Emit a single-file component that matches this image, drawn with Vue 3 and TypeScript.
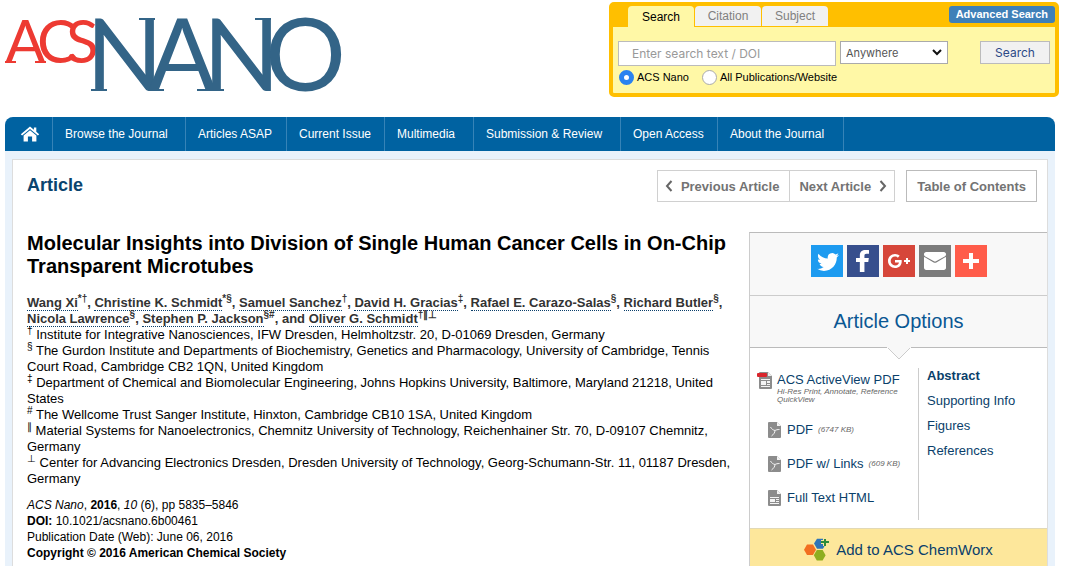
<script setup lang="ts">
import { ref } from 'vue'

interface Author {
  name: string
  marks: string
}

interface Affiliation {
  mark: string
  text: string
}

const scopes = ['Search', 'Citation', 'Subject']
const activeScope = ref('Search')
const query = ref('')
const field = ref('Anywhere')
const where = ref('nano')

const navItems = [
  'Browse the Journal',
  'Articles ASAP',
  'Current Issue',
  'Multimedia',
  'Submission & Review',
  'Open Access',
  'About the Journal',
]

const authors: Author[] = [
  { name: 'Wang Xi', marks: '*†' },
  { name: 'Christine K. Schmidt', marks: '*§' },
  { name: 'Samuel Sanchez', marks: '†' },
  { name: 'David H. Gracias', marks: '‡' },
  { name: 'Rafael E. Carazo-Salas', marks: '§' },
  { name: 'Richard Butler', marks: '§' },
  { name: 'Nicola Lawrence', marks: '§' },
  { name: 'Stephen P. Jackson', marks: '§#' },
  { name: 'Oliver G. Schmidt', marks: '†∥⊥' },
]

const affiliations: Affiliation[] = [
  { mark: '†', text: 'Institute for Integrative Nanosciences, IFW Dresden, Helmholtzstr. 20, D-01069 Dresden, Germany' },
  { mark: '§', text: 'The Gurdon Institute and Departments of Biochemistry, Genetics and Pharmacology, University of Cambridge, Tennis Court Road, Cambridge CB2 1QN, United Kingdom' },
  { mark: '‡', text: 'Department of Chemical and Biomolecular Engineering, Johns Hopkins University, Baltimore, Maryland 21218, United States' },
  { mark: '#', text: 'The Wellcome Trust Sanger Institute, Hinxton, Cambridge CB10 1SA, United Kingdom' },
  { mark: '∥', text: 'Material Systems for Nanoelectronics, Chemnitz University of Technology, Reichenhainer Str. 70, D-09107 Chemnitz, Germany' },
  { mark: '⊥', text: 'Center for Advancing Electronics Dresden, Dresden University of Technology, Georg-Schumann-Str. 11, 01187 Dresden, Germany' },
]

const shares = [
  {
    name: 'Twitter',
    tone: 'twitter',
    path: 'M27.996 10.116c-.81.36-1.68.602-2.592.71a4.526 4.526 0 0 0 1.984-2.496 9.037 9.037 0 0 1-2.866 1.095 4.513 4.513 0 0 0-7.69 4.116 12.81 12.81 0 0 1-9.3-4.715 4.49 4.49 0 0 0-.612 2.27 4.51 4.51 0 0 0 2.008 3.755 4.495 4.495 0 0 1-2.044-.564v.057a4.515 4.515 0 0 0 3.62 4.425 4.52 4.52 0 0 1-2.04.077 4.517 4.517 0 0 0 4.217 3.134 9.055 9.055 0 0 1-5.604 1.93A9.18 9.18 0 0 1 6 23.85a12.773 12.773 0 0 0 6.918 2.027c8.3 0 12.84-6.876 12.84-12.84 0-.195-.005-.39-.014-.583a9.172 9.172 0 0 0 2.252-2.336',
  },
  {
    name: 'Facebook',
    tone: 'facebook',
    path: 'M22 5.16c-.406-.054-1.806-.16-3.43-.16-3.4 0-5.733 1.825-5.733 5.17v2.882H9v3.913h3.837V27h4.604V16.965h3.823l.587-3.913h-4.41v-2.5c0-1.123.347-1.903 2.198-1.903H22V5.16z',
  },
  {
    name: 'Google+',
    tone: 'google',
    path: 'M12 15v2.4h3.97c-.16 1.03-1.2 3.02-3.97 3.02-2.39 0-4.34-1.98-4.34-4.42s1.95-4.42 4.34-4.42c1.36 0 2.27.58 2.79 1.08l1.9-1.83C15.47 9.69 13.89 9 12 9c-3.87 0-7 3.13-7 7s3.13 7 7 7c4.04 0 6.72-2.84 6.72-6.84 0-.46-.05-.81-.11-1.16H12zm15 0h-2v-2h-2v2h-2v2h2v2h2v-2h2v-2z',
  },
  {
    name: 'Email',
    tone: 'email',
    path: 'M27 22.757c0 1.24-.988 2.243-2.19 2.243H7.19C5.98 25 5 23.994 5 22.757V12.67c0-.556.39-.773.855-.496l8.78 5.238c.782.467 1.95.467 2.73 0l8.78-5.238c.472-.28.855-.063.855.495v10.087zM27 9.243C27 8.006 26.02 7 24.81 7H7.19C5.988 7 5 8.004 5 9.243v.465c0 .554.385 1.232.857 1.514l9.61 5.233c.267.16.8.16 1.067 0l9.61-5.233c.473-.283.856-.96.856-1.514v-.465z',
  },
  { name: 'More', tone: 'more', path: 'M18 14V8h-4v6H8v4h6v6h4v-6h6v-4h-6z' },
]

const downloads = [
  { label: 'PDF', size: '(6747 KB)', kind: 'pdf' },
  { label: 'PDF w/ Links', size: '(609 KB)', kind: 'pdf' },
  { label: 'Full Text HTML', size: '', kind: 'html' },
]

const sections = ['Abstract', 'Supporting Info', 'Figures', 'References']

function joiner(index: number): string {
  if (index === authors.length - 1) return ''
  return index === authors.length - 2 ? ', and ' : ', '
}
</script>

<template>
  <div class="page">
    <header class="masthead">
      <a class="logo" href="#" aria-label="ACS Nano">
        <svg width="350" height="110" viewBox="0 0 350 110">
          <text class="logo-acs" x="5 37 66" y="63">ACS</text>
          <text class="logo-nano" x="86 148 203 265" y="91">NANO</text>
          <path d="M5 62h11M35 62h11" stroke="#ed3a32" stroke-width="2" />
          <path d="M91 90h16M139 19h16M149 90h15M197 90h27M255 19h16" stroke="#336487" stroke-width="2" />
        </svg>
      </a>

      <form class="search" @submit.prevent>
        <div class="search-top">
          <div class="tabs">
            <button
              v-for="scope in scopes"
              :key="scope"
              type="button"
              class="tab"
              :class="{ active: scope === activeScope }"
              @click="activeScope = scope"
            >{{ scope }}</button>
          </div>
          <a class="advanced" href="#">Advanced Search</a>
        </div>
        <div class="search-row">
          <input v-model="query" class="query" type="text" placeholder="Enter search text / DOI" aria-label="Search text" />
          <div class="picker">
            <select v-model="field" aria-label="Search field">
              <option>Anywhere</option>
              <option>Title</option>
              <option>Author</option>
              <option>Abstract</option>
            </select>
            <svg class="picker-arrow" width="10" height="7" viewBox="0 0 10 7"><path d="M1 1l4 4 4-4" fill="none" stroke="#111" stroke-width="2" /></svg>
          </div>
          <button class="go" type="submit">Search</button>
        </div>
        <div class="search-where">
          <label><input v-model="where" type="radio" name="where" value="nano" />ACS Nano</label>
          <label><input v-model="where" type="radio" name="where" value="all" />All Publications/Website</label>
        </div>
      </form>
    </header>

    <div class="shell">
      <nav class="nav">
        <a class="nav-home" href="#" aria-label="Home">
          <svg width="20" height="16" viewBox="0 0 20 16" fill="#fff">
            <path d="M10 0.4L0.8 8.2l1.3 1.4L10 3l7.9 6.6 1.3-1.4-2.9-2.5V1.6h-2.4v2.1z" />
            <path d="M10 4.2L3.6 9.5V15.6h4.3v-5h4.2v5h4.3V9.5z" />
          </svg>
        </a>
        <a v-for="item in navItems" :key="item" href="#">{{ item }}</a>
      </nav>

      <main class="panel">
        <div class="topline">
          <h2>Article</h2>
          <div class="pager">
            <button type="button">
              <svg width="8" height="12" viewBox="0 0 8 12"><path d="M6.5 1L2 6l4.5 5" /></svg>Previous Article
            </button>
            <button type="button">
              Next Article<svg width="8" height="12" viewBox="0 0 8 12"><path d="M1.5 1L6 6l-4.5 5" /></svg>
            </button>
          </div>
          <button type="button" class="toc">Table of Contents</button>
        </div>

        <div class="columns">
          <article class="article">
            <h1>Molecular Insights into Division of Single Human Cancer Cells in On-Chip Transparent Microtubes</h1>
            <p class="authors"><template v-for="(author, i) in authors" :key="author.name"><a href="#">{{ author.name }}</a><sup>{{ author.marks }}</sup>{{ joiner(i) }}</template></p>
            <p v-for="aff in affiliations" :key="aff.mark" class="affiliation"><sup>{{ aff.mark }}</sup> {{ aff.text }}</p>
            <div class="citation">
              <p><i>ACS Nano</i>, <b>2016</b>, <i>10</i> (6), pp 5835–5846</p>
              <p><b>DOI:</b> 10.1021/acsnano.6b00461</p>
              <p>Publication Date (Web): June 06, 2016</p>
              <p><b>Copyright © 2016 American Chemical Society</b></p>
            </div>
          </article>

          <aside class="side">
            <div class="shares">
              <a v-for="share in shares" :key="share.name" href="#" :class="share.tone" :aria-label="share.name">
                <svg width="32" height="32" viewBox="0 0 32 32" fill="#fff"><path :d="share.path" /></svg>
              </a>
            </div>
            <div class="options-head">
              <h3>Article Options</h3>
              <svg class="notch" width="24" height="13" viewBox="0 0 24 13">
                <path d="M0 0h24v1h-1L12 12 1 1H0z" fill="#f8f8f8" />
                <path d="M1 1l11 11L23 1" fill="none" stroke="#ccc" />
              </svg>
            </div>
            <div class="options">
              <div class="downloads">
                <div class="active-view">
                  <svg width="16" height="18" viewBox="0 0 16 18">
                    <path d="M3 0h8l4 4v12a1 1 0 0 1-1 1H3a1 1 0 0 1-1-1V1a1 1 0 0 1 1-1z" fill="#8c8c8c" />
                    <path d="M11 0l4 4h-4z" fill="#eee" />
                    <path d="M4 7h9v1H4zM4 9h5v4H4zM10 9h3v2h-3zM10 12h3v1h-3zM4 14h9v1H4z" fill="#f4f4f4" />
                    <rect x="0" y="1" width="10" height="4" rx="1" fill="#d9252c" />
                  </svg>
                  <div>
                    <a href="#">ACS ActiveView PDF</a>
                    <small>Hi-Res Print, Annotate, Reference QuickView</small>
                  </div>
                </div>
                <div v-for="item in downloads" :key="item.label" class="download">
                  <svg width="14" height="17" viewBox="0 0 14 17">
                    <path d="M1 0h8l4 4v11a1 1 0 0 1-1 1H1a1 1 0 0 1-1-1V1a1 1 0 0 1 1-1z" fill="#8c8c8c" />
                    <path d="M9 0l4 4H9z" fill="#f4f4f4" />
                    <path v-if="item.kind === 'pdf'" d="M2.5 5c1 2 2.500 3 4.500 3.500M11.5 7.500c-2 0-3.500.4-4.500 1M7 8.500c0 2-1.500 4-3.500 5.500" fill="none" stroke="#f4f4f4" />
                    <path v-else d="M2 7h9v1H2zM2 9h5v3H2zM8 9h3v1H8zM8 11h3v1H8zM2 13h9v1H2z" fill="#f4f4f4" />
                  </svg>
                  <a href="#">{{ item.label }}</a>
                  <small v-if="item.size">{{ item.size }}</small>
                </div>
              </div>
              <ul class="sections">
                <li v-for="(section, i) in sections" :key="section" :class="{ current: i === 0 }"><a href="#">{{ section }}</a></li>
              </ul>
            </div>
            <a class="chemworx" href="#">
              <svg width="25" height="23" viewBox="0 0 25 23">
                <path d="M3 6.5h6l3 5.2-3 5.200H3L0 11.700z" fill="#f26f21" />
                <path d="M13 .8h6l3 4.700-3 5.200h-6l-3-5.200z" fill="#2f74b8" />
                <path d="M12.800 12h5.800l3 5.200-3 5.200h-5.800l-3-5.200z" fill="#8fae1f" />
                <path d="M21 0v8M17 4h8" stroke="#fde79b" stroke-width="4" />
                <path d="M21 1v7M17 4h8" stroke="#2e8b3a" stroke-width="2" />
              </svg>
              Add to ACS ChemWorx
            </a>
          </aside>
        </div>
      </main>
    </div>
  </div>
</template>

<style>
body {
  margin: 0;
  background: #fff;
}
</style>

<style scoped>
* {
  box-sizing: border-box;
}

.page {
  display: flex;
  flex-direction: column;
  min-height: 100vh;
  font: 12px/16px "Liberation Sans", Arial, sans-serif;
  color: #000;
}

a {
  color: #0a3f6b;
  text-decoration: none;
}

button {
  margin: 0;
  font-family: inherit;
  cursor: pointer;
}

h1,
h2,
h3,
p,
ul {
  margin: 0;
  padding: 0;
}

.masthead {
  display: flex;
  justify-content: space-between;
  align-items: flex-start;
  height: 117px;
  padding: 2px 9px 0 0;
}

.logo svg {
  display: block;
  margin-top: -2px;
}

.logo-acs {
  font: 60px Lato, sans-serif;
  fill: #ed3a32;
}

.logo-nano {
  font: 101px Lato, sans-serif;
  fill: #336487;
}

.search {
  width: 450px;
  padding-bottom: 8px;
  border: 4px solid #ffbf00;
  border-radius: 5px;
  background: #fff8a6;
}

.search-top {
  display: flex;
  justify-content: space-between;
  align-items: flex-start;
  height: 21px;
  padding-left: 15px;
  background: #ffbf00;
}

.tabs {
  display: flex;
  gap: 1px;
}

.tab {
  width: 66px;
  height: 20px;
  padding: 0;
  border: 0;
  border-radius: 4px 4px 0 0;
  background: #f1f1f1;
  color: #808080;
  font-size: 12px;
}

.tab.active {
  height: 21px;
  background: #fff8a6;
  color: #000;
}

.advanced {
  padding: 0 7px;
  border-radius: 3px;
  background: #3f80b8;
  color: #fff;
  font-size: 11px;
  font-weight: bold;
  line-height: 17px;
}

.search-row {
  display: flex;
  align-items: flex-start;
  gap: 4px;
  padding: 14px 5px 0;
}

.query {
  width: 218px;
  height: 25px;
  padding: 0 13px;
  border: 1px solid #bbb;
  background: #fff;
  font: 12px Inter, sans-serif;
}

.query::placeholder {
  color: #999;
}

.picker {
  position: relative;
}

.picker select {
  display: block;
  width: 108px;
  height: 23px;
  padding: 0 5px;
  border: 1px solid #aaa;
  border-radius: 0;
  background: #fff;
  color: #555;
  font: 11px Inter, sans-serif;
  appearance: none;
}

.picker-arrow {
  position: absolute;
  top: 8px;
  right: 6px;
  pointer-events: none;
}

.go {
  width: 70px;
  height: 23px;
  margin-left: auto;
  padding: 0;
  border: 1px solid #bbb;
  background: #f1f1f1;
  color: #2c4a86;
  font: 12px Inter, sans-serif;
}

.search-where {
  display: flex;
  gap: 13px;
  padding: 3px 6px 0;
  font-size: 11px;
}

.search-where label {
  display: flex;
  align-items: center;
  gap: 3px;
}

.search-where input {
  width: 15px;
  height: 15px;
  margin: 0;
  border: 1px solid #aaa;
  border-radius: 50%;
  background: #fff;
  appearance: none;
}

.search-where input:checked {
  border: 5px solid #2a82f0;
}

.shell {
  display: flex;
  flex: 1;
  flex-direction: column;
  margin: 0 13px 0 5px;
  border-radius: 8px 8px 0 0;
  background: #e9f2fb;
}

.nav {
  display: grid;
  grid-template-columns: 48px 133px 101px 98px 89px 147px 97px 126px;
  height: 34px;
  border-radius: 8px 8px 0 0;
  background: #0062a1;
}

.nav a {
  padding-left: 12px;
  border-right: 1px solid #3683b7;
  color: #fff;
  line-height: 34px;
  white-space: nowrap;
}

.nav .nav-home {
  display: flex;
  align-items: center;
  padding-left: 15px;
}

.panel {
  display: flex;
  flex: 1;
  flex-direction: column;
  margin: 8px 7px 0;
  border: 1px solid #ddd;
  border-bottom: 0;
  background: #fff;
}

.topline {
  display: flex;
  align-items: flex-start;
  padding: 10px 10px 0 14px;
}

.topline h2 {
  flex: 1;
  color: #0a446e;
  font-size: 18px;
  line-height: 30px;
}

.topline button {
  height: 32px;
  border: 1px solid #d0d0d0;
  background: #fff;
  color: #737373;
  font-size: 13px;
  font-weight: bold;
}

.pager {
  display: flex;
}

.pager button {
  display: flex;
  align-items: center;
  gap: 8px;
  padding: 0 10px 0 7px;
}

.pager button + button {
  padding: 0 7px 0 9px;
  border-left: 0;
}

.pager path {
  fill: none;
  stroke: #666;
  stroke-width: 2;
}

.topline .toc {
  margin-left: 11px;
  padding: 0 10px;
  border-color: #bbb;
}

.columns {
  display: flex;
  flex: 1;
  margin-top: 30px;
}

.article {
  flex: 1;
  padding: 0 14px;
}

h1 {
  margin-bottom: 17px;
  font-size: 20px;
  line-height: 23px;
}

sup {
  font-size: 10px;
  line-height: 0;
}

.authors,
.affiliation {
  font-size: 13px;
}

.authors {
  color: #333;
  font-weight: bold;
}

.authors a {
  border-bottom: 1px dotted #0a3f6b;
  color: #333;
}

.citation {
  margin-top: 10px;
}

.side {
  display: flex;
  flex-direction: column;
  width: 298px;
  border-top: 1px solid #bbb;
  border-left: 1px solid #ccc;
}

.shares {
  display: flex;
  justify-content: center;
  gap: 4px;
  padding: 12px 0 18px;
  border-bottom: 1px solid #ccc;
  background: #f8f8f8;
}

.shares a,
.shares svg {
  display: block;
}

.twitter {
  background: #1d9bf0;
}

.facebook {
  background: #374f8d;
}

.google {
  background: #d6463a;
}

.email {
  background: #7c7c7c;
}

.more {
  background: #ff5c4a;
}

.options-head {
  position: relative;
  border-bottom: 1px solid #bbb;
  background: #f8f8f8;
}

.options-head h3 {
  color: #0a5793;
  font-size: 20px;
  font-weight: normal;
  line-height: 51px;
  text-align: center;
}

.notch {
  position: absolute;
  top: 51px;
  left: calc(50% - 12px);
}

.options {
  display: flex;
  padding: 20px 0 8px 7px;
  font-size: 13px;
}

.downloads {
  display: flex;
  flex-direction: column;
  width: 162px;
  height: 152px;
  border-right: 1px solid #ccc;
}

.active-view {
  display: flex;
  gap: 4px;
  padding-top: 4px;
}

.active-view svg {
  flex: none;
}

.active-view a {
  display: block;
  white-space: nowrap;
}

small {
  display: block;
  color: #666;
  font-size: 8px;
  font-style: italic;
  line-height: 8px;
}

.download {
  display: flex;
  align-items: center;
  gap: 5px;
  height: 34px;
  padding-left: 11px;
}

.active-view + .download {
  margin-top: 9px;
}

.sections {
  padding-left: 8px;
  list-style: none;
  line-height: 25px;
  margin-top: -5px;
}

.current {
  font-weight: bold;
}

.chemworx {
  display: flex;
  flex: 1;
  align-items: flex-start;
  justify-content: center;
  gap: 7px;
  padding: 9px 0 5px;
  border-top: 1px solid #e2d9b5;
  background: #fde79b;
  font-size: 15px;
  line-height: 23px;
}
</style>
